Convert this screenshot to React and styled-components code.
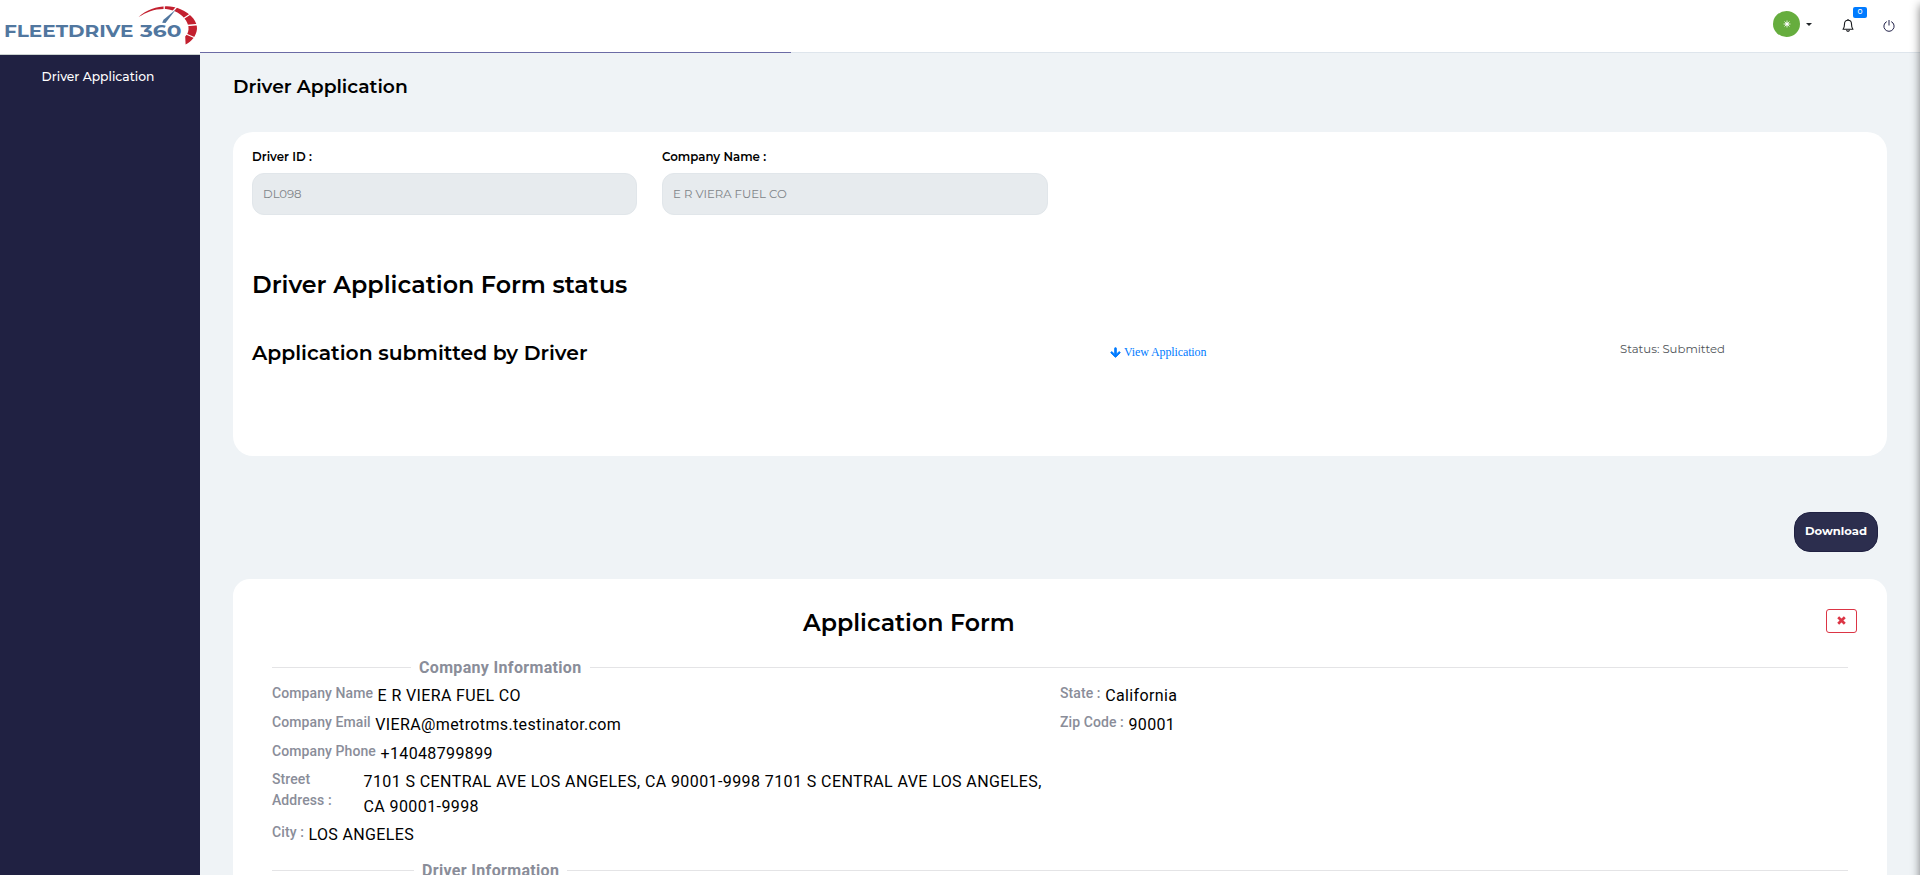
import React from 'react';
import styled, { createGlobalStyle } from 'styled-components';
import { FaArrowDown } from 'react-icons/fa';

const GlobalStyle = createGlobalStyle`
  * { box-sizing: border-box; }
  body { margin: 0; background: #eff3f6; overflow: hidden; }
`;

const sans = '"Montserrat", "Inter", sans-serif';

const Page = styled.div`
  position: relative;
  display: grid;
  grid-template-columns: 200px 1fr;
  width: 100%;
  height: 875px;
  overflow: hidden;
  font-family: ${sans};
  color: #000;
`;

const Sidebar = styled.aside`
  display: flex;
  flex-direction: column;
  background: #202142;
`;

const Brand = styled.div`
  flex: none;
  height: 55px;
  background: #fff;
  border-bottom: 1px solid #ccd3d0;
`;

const NavItem = styled.a`
  padding: 12px 4px 0 0;
  font-size: 12.3px;
  font-weight: 500;
  line-height: 20px;
  text-align: center;
  color: #fff;
`;

const Main = styled.main`
  display: flex;
  flex-direction: column;
  min-width: 0;
`;

const TopBar = styled.header`
  display: flex;
  justify-content: flex-end;
  flex: none;
  height: 52px;
  padding-right: 25px;
  background: #fff;
`;

const Progress = styled.div`
  flex: none;
  height: 1px;
  background: linear-gradient(to right, #6b6ba5 591px, #dee5ec 591px);
`;

const Avatar = styled.div`
  display: flex;
  align-items: center;
  justify-content: center;
  width: 27px;
  height: 26px;
  margin: 11px 6px 0 0;
  border-radius: 50%;
  background: #66ad3e;
`;

const Caret = styled.span`
  width: 0;
  height: 0;
  margin: 23px 30px 0 0;
  border: 3px solid transparent;
  border-top-color: #212529;
  border-bottom: 0;
`;

const BellButton = styled.div`
  position: relative;
  width: 12px;
  margin: 18px 29px 0 0;
`;

const Badge = styled.span`
  position: absolute;
  top: -11px;
  left: 11px;
  width: 14px;
  height: 11px;
  border-radius: 2px;
  background: #007bff;
  color: #fff;
  font-size: 7.5px;
  font-weight: 500;
  line-height: 10px;
  text-align: center;
`;

const PowerIcon = styled.svg`
  margin-top: 19px;
`;

const Content = styled.div`
  display: flex;
  flex-direction: column;
  padding: 23px 33px 0;
`;

const PageTitle = styled.h1`
  margin: 0 0 34px;
  font-size: 18.72px;
  font-weight: 600;
  line-height: 22px;
`;

const Card = styled.section`
  flex: none;
  width: 1654px;
  background: #fff;
`;

const StatusCard = styled(Card)`
  height: 324px;
  padding: 16px 19px 0;
  border-radius: 20px;
`;

const FormCard = styled(Card)`
  height: 420px;
  padding: 30px 39px 0;
  border-radius: 17px;
`;

const Fields = styled.div`
  display: grid;
  grid-template-columns: 385px 386px;
  column-gap: 25px;
`;

const FieldLabel = styled.label`
  display: block;
  margin-bottom: 7px;
  font-size: 11.8px;
  font-weight: 600;
  line-height: 18px;
`;

const FieldValue = styled.div`
  height: 42px;
  padding: 0 10px;
  border: 1px solid #e1e6ea;
  border-radius: 12px;
  background: #e7ebee;
  color: #808488;
  font-size: 11.7px;
  font-weight: 400;
  line-height: 40px;
`;

const StatusHeading = styled.h2`
  margin: 55px 0 38px;
  font-size: 23.8px;
  font-weight: 600;
  line-height: 30px;
`;

const StatusRow = styled.div`
  display: grid;
  grid-template-columns: 858px 510px auto;
  line-height: 30px;
`;

const StatusTitle = styled.h3`
  margin: 0;
  font-size: 20.35px;
  font-weight: 600;
`;

const ViewLink = styled.a`
  display: flex;
  align-items: center;
  gap: 3px;
  height: 28px;
  color: #007bff;
  font: 400 12px "Liberation Serif", serif;
  letter-spacing: -0.12px;

  svg {
    stroke: currentColor;
    stroke-width: 40px;
  }
`;

const StatusText = styled.span`
  height: 22px;
  color: #505458;
  font-size: 11.7px;
  line-height: 22px;
`;

const DownloadButton = styled.button`
  align-self: flex-end;
  flex: none;
  width: 84px;
  height: 40px;
  margin: 56px 9px 27px 0;
  padding: 0 0 3px;
  border: 1px solid #202142;
  border-radius: 16px;
  background: #2c2e4e;
  color: #fff;
  font: 700 11.6px ${sans};
`;

const FormHeader = styled.div`
  display: flex;
  align-items: flex-start;
  justify-content: space-between;
  height: 48px;
`;

const FormTitle = styled.h2`
  flex: 1;
  margin: 0;
  padding-left: 531px;
  font-size: 23.7px;
  font-weight: 600;
  line-height: 28px;
`;

const CloseButton = styled.button`
  display: flex;
  align-items: center;
  justify-content: center;
  width: 31px;
  height: 24px;
  margin-right: -9px;
  padding: 0 0 2px;
  border: 1px solid #dc3545;
  border-radius: 3px;
  background: #fff;
`;

const Legend = styled.div`
  display: flex;
  align-items: center;
  gap: 8px;
  height: 21px;
  color: #8a8d99;
  font-family: Roboto, sans-serif;
  font-size: 16px;
  font-weight: 700;
  letter-spacing: 0.33px;
  white-space: nowrap;

  &::before,
  &::after {
    content: '';
    height: 1px;
    background: #e4e4e6;
  }
  &::before { width: ${(p) => p.$lead}px; }
  &::after { flex: 1; }
`;

const Columns = styled.div`
  display: grid;
  grid-template-columns: 1fr 1fr;
  height: 182px;
  padding-top: 5px;
`;

const Entry = styled.div`
  display: flex;
  gap: ${(p) => (p.$wide ? 0 : 4.5)}px;
  height: ${(p) => p.$height || 29}px;
  font-family: Roboto, sans-serif;
`;

const EntryLabel = styled.span`
  flex: none;
  width: ${(p) => (p.$wide ? '91.5px' : 'auto')};
  padding-right: ${(p) => (p.$wide ? 30 : 0)}px;
  color: #8a8d99;
  font-size: 14px;
  font-weight: 500;
  line-height: 21px;
  letter-spacing: 0.09px;
`;

const EntryValue = styled.span`
  font-size: 16px;
  line-height: 25px;
  letter-spacing: ${(p) => (p.$wide ? 0.41 : 0.37)}px;
`;

const DrawerEdge = styled.div`
  position: absolute;
  top: 5px;
  right: -20px;
  width: 20px;
  height: 900px;
  box-shadow: 0 0 10px rgba(0, 0, 0, 0.5);
`;

const LogoText = styled.text`
  font-family: ${sans};
  font-size: 15.9px;
  font-weight: 700;
  fill: #51779f;
`;

const Logo = () => (
  <svg width="200" height="54" viewBox="0 0 200 54">
    <LogoText x="4" y="36.600" textLength="129.500" lengthAdjust="spacingAndGlyphs">FLEETDRIVE</LogoText>
    <LogoText x="140" y="36.600" textLength="41.500" lengthAdjust="spacingAndGlyphs">360</LogoText>
    <path d="M138.500 17C150 6.500 168 3.500 180 9C192 14 197.500 22 197 29C196 36.500 192 41 185.600 44.500L185.200 36.500C189 33 190 27 186 20.500C182 14 174 9.800 166 9C155 8.400 147 12 138.500 17Z" fill="#c3202f" />
    <path d="M164.200 5.500V10M177.500 6L171.500 13M192 13L183.500 18.500M198.500 24.500L187 25.500M196.500 38.500L186 34" stroke="#fff" strokeWidth="1.300" />
    <path d="M175.800 9.500L165.500 23L162.200 22.800L163.500 19.800Z" fill="#51779f" />
  </svg>
);

const leftEntries = [
  { label: 'Company Name', value: 'E R VIERA FUEL CO' },
  { label: 'Company Email', value: 'VIERA@metrotms.testinator.com' },
  { label: 'Company Phone', value: '+14048799899', height: 28 },
  {
    label: 'Street Address :',
    value: '7101 S CENTRAL AVE LOS ANGELES, CA 90001-9998 7101 S CENTRAL AVE LOS ANGELES, CA 90001-9998',
    height: 53,
    wide: true,
  },
  { label: 'City :', value: 'LOS ANGELES' },
];

const rightEntries = [
  { label: 'State :', value: 'California' },
  { label: 'Zip Code :', value: '90001' },
];

const EntryList = ({ entries }) => (
  <div>
    {entries.map((e) => (
      <Entry key={e.label} $height={e.height} $wide={e.wide}>
        <EntryLabel $wide={e.wide}>{e.label}</EntryLabel>
        <EntryValue $wide={e.wide}>{e.value}</EntryValue>
      </Entry>
    ))}
  </div>
);

export default function App() {
  return (
    <Page>
      <GlobalStyle />
      <Sidebar>
        <Brand><Logo /></Brand>
        <NavItem>Driver Application</NavItem>
      </Sidebar>
      <Main>
        <TopBar>
          <Avatar>
            <svg width="8" height="8" viewBox="0 0 8 8">
              <path d="M4 .5V7.500M.5 4H7.500M1.500 1.500L6.500 6.500M6.500 1.500L1.500 6.500" stroke="#fff" strokeWidth=".8" />
              <circle cx="4" cy="4" r="1.600" fill="#fff" />
            </svg>
          </Avatar>
          <Caret />
          <BellButton>
            <svg width="12" height="15" viewBox="0 0 12 15" fill="none" stroke="#16181c" strokeWidth="1.100">
              <path d="M1 11.300H11C9.600 10 9.500 8.500 9.500 6C9.500 3.500 8 2.200 6 2.200S2.500 3.500 2.500 6C2.500 8.500 2.400 10 1 11.300Z" strokeLinejoin="round" />
              <path d="M6 1V2.200M4.600 11.800C4.600 13.900 7.400 13.900 7.400 11.800" />
            </svg>
            <Badge>0</Badge>
          </BellButton>
          <PowerIcon width="12" height="14" viewBox="0 0 12 14" fill="none" stroke="#23234a" strokeWidth="1">
            <path d="M3.800 2.600A5.100 5.100 0 1 0 8.200 2.600M6 1V6.500" />
          </PowerIcon>
        </TopBar>
        <Progress />
        <Content>
          <PageTitle>Driver Application</PageTitle>
          <StatusCard>
            <Fields>
              <div>
                <FieldLabel>Driver ID :</FieldLabel>
                <FieldValue>DL098</FieldValue>
              </div>
              <div>
                <FieldLabel>Company Name :</FieldLabel>
                <FieldValue>E R VIERA FUEL CO</FieldValue>
              </div>
            </Fields>
            <StatusHeading>Driver Application Form status</StatusHeading>
            <StatusRow>
              <StatusTitle>Application submitted by Driver</StatusTitle>
              <ViewLink><FaArrowDown size={11} />View Application</ViewLink>
              <StatusText>Status: Submitted</StatusText>
            </StatusRow>
          </StatusCard>
          <DownloadButton>Download</DownloadButton>
          <FormCard>
            <FormHeader>
              <FormTitle>Application Form</FormTitle>
              <CloseButton aria-label="Close">
                <svg width="9" height="9" viewBox="0 0 9 9">
                  <path d="M1.200 1.200L7.800 7.800M7.800 1.200L1.200 7.800" stroke="#dc3545" strokeWidth="2.700" />
                </svg>
              </CloseButton>
            </FormHeader>
            <Legend $lead={139}>Company Information</Legend>
            <Columns>
              <EntryList entries={leftEntries} />
              <EntryList entries={rightEntries} />
            </Columns>
            <Legend $lead={142}>Driver Information</Legend>
          </FormCard>
        </Content>
      </Main>
      <DrawerEdge />
    </Page>
  );
}
